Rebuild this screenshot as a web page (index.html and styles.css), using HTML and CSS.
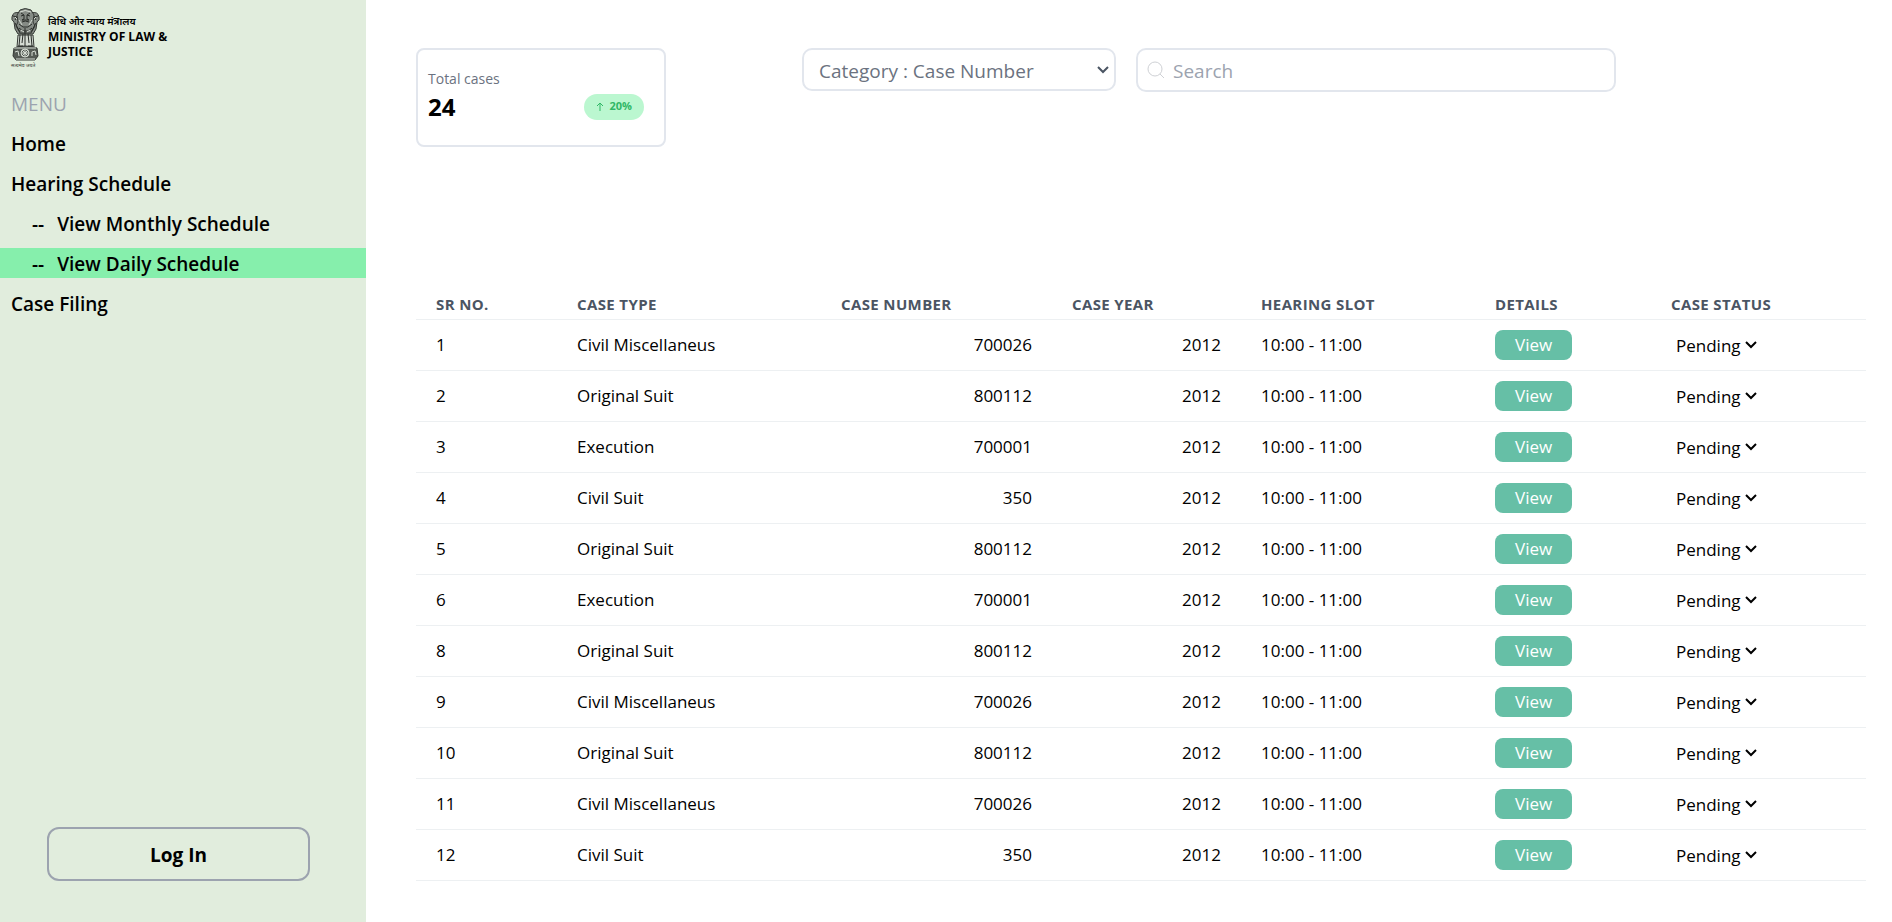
FILE: index.html
```html
<!DOCTYPE html>
<html lang="en">
<head>
<meta charset="utf-8">
<title>Daily Schedule</title>
<link rel="stylesheet" href="styles.css">
</head>
<body>
<div class="layout">
  <aside class="sidebar">
    <div class="brand">
      <div class="emblem">
        <svg class="emblem-art" width="29" height="53" viewBox="0 0 29 53" aria-hidden="true">
          <g fill="#858b85" stroke="#343834" stroke-width="1">
            <path d="M9 5Q2 3 1 9q-1 3 2 5l1 7 3 5h15l3-5 1-7q3-2 2-5-1-6-8-4z"/>
            <path d="M9 2q5-3 11 0l3 5-1 7 2 4-4 7H9l-4-7 2-4-1-7z"/>
            <path d="M7 27h15l1 12H6z" fill="#d5dcd3"/>
            <path d="M3 40q11-4 23 0l1 8-3 4H5l-3-4z" fill="#555b55"/>
          </g>
          <g fill="none" stroke="#292d29" stroke-width="1">
            <path d="M10 5l3 2-3 1M19 5l-3 2 3 1M13 7v4l-2 1h7l-2-1V7M11 14q3-2 7 0M8 16l4 3 5 0 4-3M8 20l4 3h5l4-3M2 8l4 1-2 3M27 8l-4 1 2 3M4 15l5 9M25 15l-5 9M14 20v6"/>
            <path d="M9 27l-1 11M12 26l-1 9M14 26v12M17 26l1 9M20 27l1 11M7 38h5M17 38h5"/>
          </g>
          <g fill="none" stroke="#d6ddd4" stroke-width="1">
            <path d="M9 4q5-3 11 0M8 12q2 3 3 5M21 12q-2 3-3 5M10 22l3 2M19 22l-3 2M4 9l2 2M25 9l-2 2"/>
            <circle cx="14" cy="45" r="4"/>
            <path d="M14 41v8M10 45h8M11 42l6 6M17 42l-6 6M4 44l3-1 1 5M21 48v-4l3-1 1 4M5 51h19M3 40h22"/>
          </g>
        </svg>
        <span class="motto" lang="hi">सत्यमेव जयते</span>
      </div>
      <div class="brand-text">
        <span class="brand-hindi" lang="hi">विधि और न्याय मंत्रालय</span>
        <strong class="brand-name">MINISTRY OF LAW &amp;<br>JUSTICE</strong>
      </div>
    </div>
    <nav class="menu" aria-label="Menu">
      <span class="menu-title">MENU</span>
      <a class="menu-item" href="#">Home</a>
      <a class="menu-item" href="#">Hearing Schedule</a>
      <a class="menu-item menu-sub" href="#"><span>--</span>View Monthly Schedule</a>
      <a class="menu-item menu-sub menu-active" href="#" aria-current="page"><span>--</span>View Daily Schedule</a>
      <a class="menu-item" href="#">Case Filing</a>
    </nav>
    <button class="login" type="button">Log In</button>
  </aside>
  <main class="main">
    <div class="toolbar">
      <section class="card">
        <div>
          <div class="card-label">Total cases</div>
          <div class="card-value">24</div>
        </div>
        <span class="badge">
          <svg width="8" height="9" viewBox="0 0 8 9" fill="none" stroke="currentColor" stroke-width="1" aria-hidden="true"><path d="M4 9V1M1 4l3-3 3 3"/></svg>
          20%
        </span>
      </section>
      <form class="filters">
        <select class="category" aria-label="Category"><option>Category : Case Number</option></select>
        <label class="search">
          <svg width="18" height="18" viewBox="0 0 18 18" fill="none" stroke="#cfd1d5" stroke-width="1" aria-hidden="true"><circle cx="8" cy="8" r="7"/><path d="M13 13l4 4"/></svg>
          <input class="search-input" type="text" placeholder="Search" aria-label="Search">
        </label>
      </form>
    </div>
    <table class="cases">
      <colgroup><col class="c-sr"><col class="c-type"><col class="c-number"><col class="c-year"><col class="c-slot"><col class="c-details"><col class="c-status"></colgroup>
      <thead><tr><th>SR NO.</th><th>CASE TYPE</th><th>CASE NUMBER</th><th>CASE YEAR</th><th>HEARING SLOT</th><th>DETAILS</th><th>CASE STATUS</th></tr></thead>
      <tbody>
        <tr><td>1</td><td>Civil Miscellaneus</td><td class="num">700026</td><td class="num">2012</td><td>10:00 - 11:00</td><td><button class="view" type="button">View</button></td><td><select class="status" aria-label="Case status"><option>Pending</option></select></td></tr>
        <tr><td>2</td><td>Original Suit</td><td class="num">800112</td><td class="num">2012</td><td>10:00 - 11:00</td><td><button class="view" type="button">View</button></td><td><select class="status" aria-label="Case status"><option>Pending</option></select></td></tr>
        <tr><td>3</td><td>Execution</td><td class="num">700001</td><td class="num">2012</td><td>10:00 - 11:00</td><td><button class="view" type="button">View</button></td><td><select class="status" aria-label="Case status"><option>Pending</option></select></td></tr>
        <tr><td>4</td><td>Civil Suit</td><td class="num">350</td><td class="num">2012</td><td>10:00 - 11:00</td><td><button class="view" type="button">View</button></td><td><select class="status" aria-label="Case status"><option>Pending</option></select></td></tr>
        <tr><td>5</td><td>Original Suit</td><td class="num">800112</td><td class="num">2012</td><td>10:00 - 11:00</td><td><button class="view" type="button">View</button></td><td><select class="status" aria-label="Case status"><option>Pending</option></select></td></tr>
        <tr><td>6</td><td>Execution</td><td class="num">700001</td><td class="num">2012</td><td>10:00 - 11:00</td><td><button class="view" type="button">View</button></td><td><select class="status" aria-label="Case status"><option>Pending</option></select></td></tr>
        <tr><td>8</td><td>Original Suit</td><td class="num">800112</td><td class="num">2012</td><td>10:00 - 11:00</td><td><button class="view" type="button">View</button></td><td><select class="status" aria-label="Case status"><option>Pending</option></select></td></tr>
        <tr><td>9</td><td>Civil Miscellaneus</td><td class="num">700026</td><td class="num">2012</td><td>10:00 - 11:00</td><td><button class="view" type="button">View</button></td><td><select class="status" aria-label="Case status"><option>Pending</option></select></td></tr>
        <tr><td>10</td><td>Original Suit</td><td class="num">800112</td><td class="num">2012</td><td>10:00 - 11:00</td><td><button class="view" type="button">View</button></td><td><select class="status" aria-label="Case status"><option>Pending</option></select></td></tr>
        <tr><td>11</td><td>Civil Miscellaneus</td><td class="num">700026</td><td class="num">2012</td><td>10:00 - 11:00</td><td><button class="view" type="button">View</button></td><td><select class="status" aria-label="Case status"><option>Pending</option></select></td></tr>
        <tr><td>12</td><td>Civil Suit</td><td class="num">350</td><td class="num">2012</td><td>10:00 - 11:00</td><td><button class="view" type="button">View</button></td><td><select class="status" aria-label="Case status"><option>Pending</option></select></td></tr>
      </tbody>
    </table>
  </main>
</div>
</body>
</html>
```

FILE: styles.css
```css
* { box-sizing: border-box; }
body {
  margin: 0;
  background: #fff;
  color: #000;
  font: 17px/24px "Open Sans", "Noto Sans", sans-serif;
}
button, input, select { font: inherit; color: inherit; margin: 0; }
.layout { display: flex; min-height: 100vh; }

.sidebar {
  display: flex;
  flex-direction: column;
  flex: 0 0 366px;
  background: #e1eddd;
}
.brand { display: flex; gap: 8px; height: 88px; padding: 8px 11px; }
.emblem { display: flex; flex-direction: column; width: 29px; }
.emblem-art { display: block; }
.motto { font-size: 5px; line-height: 8px; white-space: nowrap; color: #343834; }
.brand-text { padding-top: 6px; }
.brand-hindi { display: block; font-size: 10px; font-weight: 600; line-height: 15px; }
.brand-name { display: block; font-size: 12px; line-height: 15px; }
.menu { display: flex; flex-direction: column; gap: 10px; }
.menu-title, .menu-item { padding: 2px 11px 0; font-size: 19px; line-height: 28px; }
.menu-title { color: #9ca3af; }
.menu-item { color: #000; font-weight: 600; text-decoration: none; }
.menu-sub { display: flex; gap: 13px; padding-left: 32px; }
.menu-active { background: #86efac; }
.login {
  height: 54px;
  margin: auto 56px 41px 47px;
  padding: 2px 0 0;
  border: 2px solid #9ca3af;
  border-radius: 12px;
  background: transparent;
  font-size: 19px;
  font-weight: 700;
}

.main { flex: 1; min-width: 0; padding: 48px 26px 0 50px; }
.toolbar { display: flex; align-items: flex-start; gap: 136px; min-height: 236px; }
.card {
  display: flex;
  align-items: flex-end;
  justify-content: space-between;
  width: 250px;
  height: 99px;
  padding: 0 20px 22px 10px;
  border: 2px solid #e2e6ed;
  border-radius: 8px;
}
.card-label { color: #6b7280; font-size: 14px; line-height: 24px; }
.card-value { font-size: 24px; font-weight: 700; line-height: 32px; }
.badge {
  display: flex;
  align-items: center;
  gap: 6px;
  height: 26px;
  margin-bottom: 3px;
  padding: 0 12px 2px;
  border-radius: 13px;
  background: #bbf7d0;
  color: #30b866;
  font-size: 11px;
  font-weight: 700;
}
.filters { display: flex; align-items: flex-start; gap: 20px; }
.category {
  width: 314px;
  height: 43px;
  padding: 2px 0 0 15px;
  border: 2px solid #e2e6ed;
  border-radius: 10px;
  appearance: none;
  background: #fff url("data:image/svg+xml,%3Csvg xmlns='http://www.w3.org/2000/svg' width='12' height='8' fill='none' stroke='%234b5563' stroke-width='2'%3E%3Cpath d='M1 1l5 5 5-5'/%3E%3C/svg%3E") no-repeat right 5px center;
  color: #6b7280;
  font-size: 19px;
}
.search {
  display: flex;
  align-items: center;
  gap: 8px;
  width: 480px;
  height: 44px;
  padding: 0 9px;
  border: 2px solid #e2e6ed;
  border-radius: 10px;
}
.search-input { flex: 1; min-width: 0; padding: 2px 0 0; border: 0; outline: 0; background: transparent; font-size: 19px; }
.search-input::placeholder { color: #9ca3af; opacity: 1; }

.cases { width: 100%; table-layout: fixed; border-collapse: collapse; }
.c-sr { width: 141px; }
.c-type { width: 264px; }
.c-number { width: 231px; }
.c-year { width: 189px; }
.c-slot { width: 234px; }
.c-details { width: 176px; }
.c-status { width: 215px; }
.cases th {
  height: 35px;
  padding: 6px 20px 0;
  border-bottom: 1px solid #edf0f2;
  color: #4b5563;
  font-size: 15px;
  font-weight: 700;
  letter-spacing: 0.025em;
  text-align: left;
}
.cases td { height: 51px; padding: 0 20px; border-bottom: 1px solid #edf0f2; }
.cases .num { text-align: right; }
.view {
  display: block;
  height: 30px;
  padding: 0 20px;
  border: 0;
  border-radius: 8px;
  background: #66bfa6;
  color: #fff;
}
.status {
  display: block;
  width: 86px;
  padding: 2px 0 0 5px;
  border: 0;
  appearance: none;
  background: transparent url("data:image/svg+xml,%3Csvg xmlns='http://www.w3.org/2000/svg' width='12' height='8' fill='none' stroke='%23000' stroke-width='2'%3E%3Cpath d='M1 1l5 5 5-5'/%3E%3C/svg%3E") no-repeat right center;
}
```
